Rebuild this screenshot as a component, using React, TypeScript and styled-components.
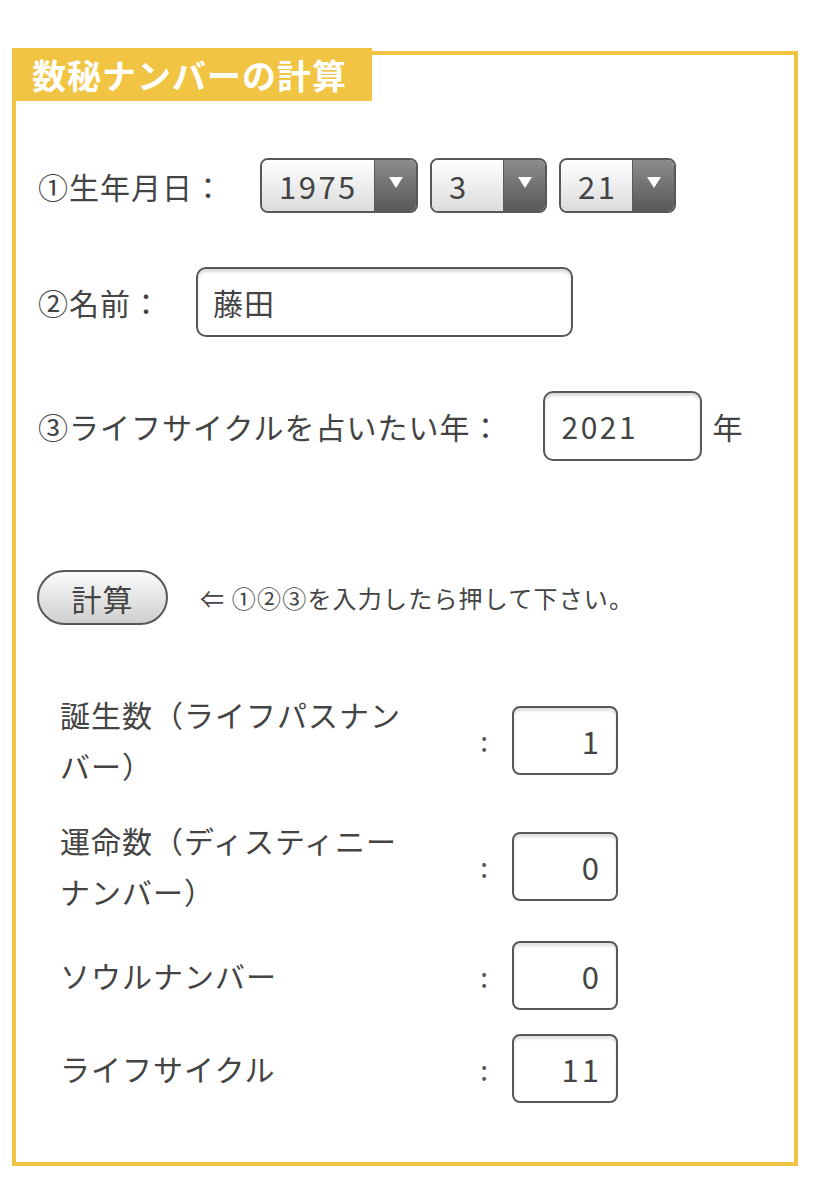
import React from 'react';
import styled, { createGlobalStyle } from 'styled-components';

const GlobalStyle = createGlobalStyle`
  html, body {
    margin: 0;
    padding: 0;
    background: #fff;
  }
  body {
    font-family: "Noto Sans CJK JP", "Noto Sans", sans-serif;
    color: #444;
  }
`

const Page = styled.div`
  padding: 51px 30px 20px 12px;
`

const Frame = styled.section`
  border: 4px solid #F2C443;
  padding: 0 0 59px 0;
`

const Title = styled.h2`
  margin: -7px 0 0 -4px;
  width: 340px;
  height: 53px;
  padding-left: 20px;
  background: #F2C443;
  color: #fff;
  font-size: 34px;
  font-weight: 700;
  line-height: 53px;
  letter-spacing: 1px;
`

const Form = styled.div`
  padding: 57px 0 0 22px;
  display: flex;
  flex-direction: column;
  gap: 54px;
`

const Row = styled.div<{ gap: number }>`
  display: flex;
  align-items: center;
  gap: ${(p) => p.gap}px;
`

const Label = styled.span`
  font-size: 30px;
  letter-spacing: 1px;
  line-height: 1.2;
  white-space: nowrap;
`

const Selects = styled.div`
  display: flex;
  gap: 12px;
`

const SelectWrap = styled.div<{ width: number }>`
  width: ${(p) => p.width}px;
  height: 55px;
  box-sizing: border-box;
  border: 2px solid #585858;
  border-radius: 8px;
  overflow: hidden;
  display: flex;
`

const NativeSelect = styled.select`
  appearance: none;
  -webkit-appearance: none;
  flex: 1;
  min-width: 0;
  border: 0;
  margin: 0;
  padding: 0 0 0 17px;
  background: linear-gradient(#ffffff, #dcdcdc);
  font-family: inherit;
  font-size: 31px;
  letter-spacing: 2.5px;
  color: #444;
  outline: none;
`

const Arrow = styled.span`
  width: 42px;
  flex: none;
  display: flex;
  align-items: center;
  justify-content: center;
  background: linear-gradient(#8c8c8c, #585858);
  border-left: 1px solid #5a5a5a;
  padding-bottom: 6px;
  box-sizing: border-box;
`

const TextInput = styled.input<{ width: number; digits?: boolean }>`
  width: ${(p) => p.width}px;
  height: 70px;
  box-sizing: border-box;
  border: 2px solid #585858;
  border-radius: 10px;
  box-shadow: inset 0 3px 3px rgba(0, 0, 0, 0.14);
  padding: 0 15px 0 ${(p) => (p.digits ? 17 : 15)}px;
  font-family: inherit;
  font-size: 30px;
  letter-spacing: ${(p) => (p.digits ? 2.5 : 1)}px;
  color: #444;
  background: #fff;
  outline: none;
`

const Unit = styled.span`
  font-size: 30px;
  margin-left: -30px;
`

const CalcRow = styled.div`
  margin-top: 109px;
  padding-left: 21px;
  display: flex;
  align-items: center;
  gap: 32px;
`

const CalcButton = styled.button`
  width: 131px;
  height: 55px;
  border: 2px solid #585858;
  border-radius: 28px;
  background: linear-gradient(#fbfbfb, #cfcfcf);
  font-family: inherit;
  font-size: 30px;
  letter-spacing: 1px;
  color: #444;
  padding: 0;
`

const Hint = styled.span`
  font-size: 24px;
  letter-spacing: 1.2px;
  color: #444;
`

const Results = styled.div`
  margin-top: 64px;
  padding-left: 44px;
  display: grid;
  grid-template-columns: 350px 102px 106px;
  row-gap: 24px;
  align-items: center;
`

const ResultLabel = styled.div`
  font-size: 30px;
  letter-spacing: 1px;
  line-height: 51px;
`

const Colon = styled.div`
  font-size: 28px;
  text-align: right;
  padding-right: 24px;
  color: #555;
`

const ResultBox = styled.div`
  height: 69px;
  box-sizing: border-box;
  border: 2px solid #585858;
  border-radius: 8px;
  box-shadow: inset 0 3px 3px rgba(0, 0, 0, 0.12);
  display: flex;
  align-items: center;
  justify-content: flex-end;
  padding-right: 14px;
  font-size: 31px;
  letter-spacing: 3px;
  color: #444;
`

const TriangleDown = () => (
  <svg width="14" height="11" viewBox="0 0 14 11">
    <path d="M0 0 L14 0 L7 11 Z" fill="#fff" />
  </svg>
)

const Select: React.FC<{ width: number; value: string }> = ({ width, value }) => (
  <SelectWrap width={width}>
    <NativeSelect defaultValue={value}>
      <option value={value}>{value}</option>
    </NativeSelect>
    <Arrow><TriangleDown /></Arrow>
  </SelectWrap>
)

const results = [
  { label: '誕生数（ライフパスナンバー）', value: '1' },
  { label: '運命数（ディスティニーナンバー）', value: '0' },
  { label: 'ソウルナンバー', value: '0' },
  { label: 'ライフサイクル', value: '11' },
]

export default function App() {
  return (
    <>
      <GlobalStyle />
      <Page>
        <Frame>
          <Title>数秘ナンバーの計算</Title>
          <Form>
            <Row gap={36}>
              <Label>①生年月日：</Label>
              <Selects>
                <Select width={158} value="1975" />
                <Select width={117} value="3" />
                <Select width={117} value="21" />
              </Selects>
            </Row>
            <Row gap={34}>
              <Label>②名前：</Label>
              <TextInput width={377} defaultValue="藤田" />
            </Row>
            <Row gap={41}>
              <Label>③ライフサイクルを占いたい年：</Label>
              <TextInput width={159} digits defaultValue="2021" />
              <Unit>年</Unit>
            </Row>
          </Form>
          <CalcRow>
            <CalcButton>計算</CalcButton>
            <Hint>⇐ ①②③を入力したら押して下さい。</Hint>
          </CalcRow>
          <Results>
            {results.map((r) => (
              <React.Fragment key={r.label}>
                <ResultLabel>{r.label}</ResultLabel>
                <Colon>:</Colon>
                <ResultBox>{r.value}</ResultBox>
              </React.Fragment>
            ))}
          </Results>
        </Frame>
      </Page>
    </>
  )
}
